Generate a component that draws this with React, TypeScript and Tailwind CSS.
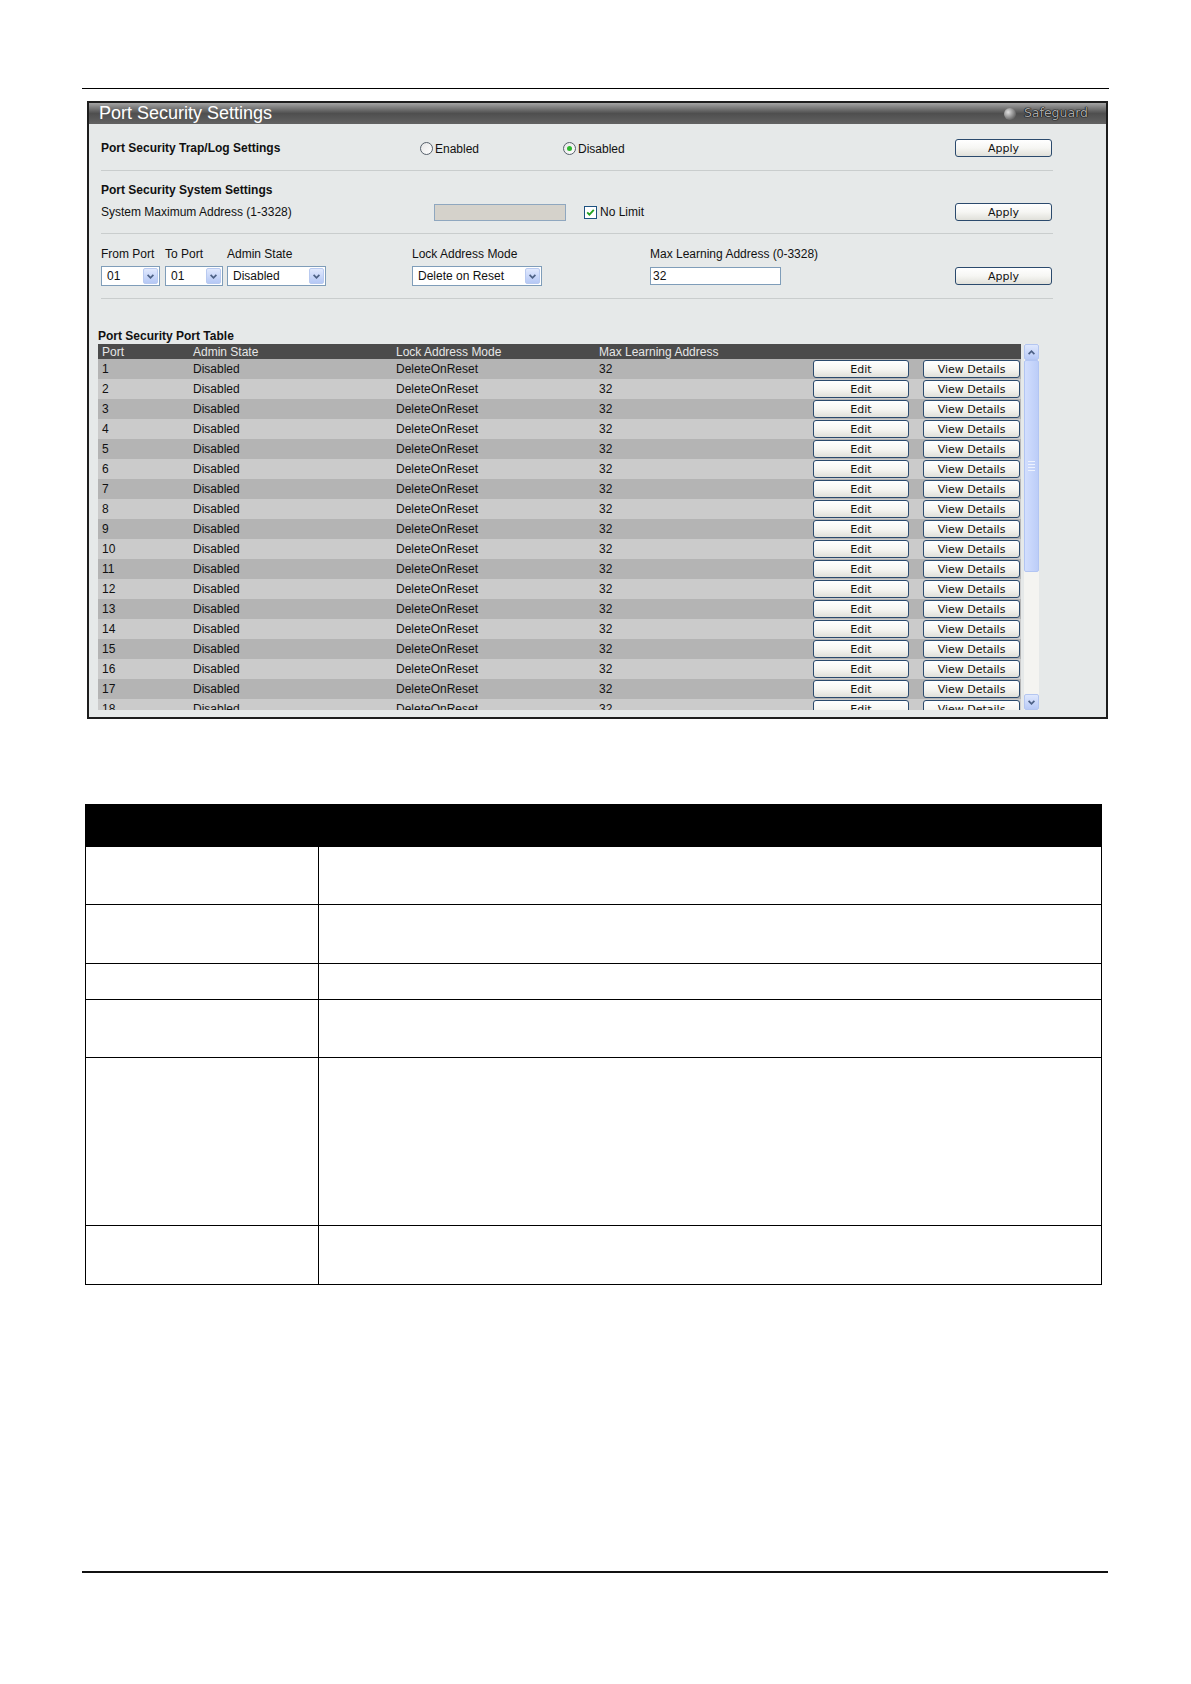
import React from 'react';

// Port Security Settings page (web UI screenshot + blank description table)

const rowCount = 18;
const descRows = ['h-[58px]', 'h-[59px]', 'h-[36px]', 'h-[58px]', 'h-[168px]', 'h-[59px]'];

const XpButton = ({ label, className }: { label: string; className: string }) => (
  <button
    type="button"
    className={`flex shrink-0 items-center justify-center rounded-[3px] border border-[#2b4a6d] bg-linear-to-b from-[#ffffff] via-[#f6f6f3] to-[#e0e0da] font-['DejaVu_Sans',Verdana,sans-serif] text-[11px] leading-none text-[#111] ${className}`}
  >
    {label}
  </button>
);

const Chevron = ({ up }: { up?: boolean }) => (
  <svg width="7" height="5" viewBox="0 0 7 5">
    <path
      d={up ? 'M0.6 4.2 L3.5 1.2 L6.4 4.2' : 'M0.6 0.8 L3.5 3.8 L6.4 0.8'}
      fill="none"
      stroke="#4d6185"
      strokeWidth="1.7"
    />
  </svg>
);

const XpSelect = ({ value, className }: { value: string; className: string }) => (
  <div className={`flex h-[20px] shrink-0 items-center justify-between border border-[#7f9db9] bg-white pl-[5px] pr-px ${className}`}>
    <span className="text-[12px] leading-none text-[#111]">{value}</span>
    <span className="flex h-[16px] w-[15px] items-center justify-center rounded-[2px] border border-[#b9caf0] bg-linear-to-b from-[#e1e9fd] to-[#b5c8f5]">
      <Chevron />
    </span>
  </div>
);

const Radio = ({ checked }: { checked?: boolean }) => (
  <span className="flex h-[13px] w-[13px] shrink-0 items-center justify-center rounded-full border border-[#56606b] bg-linear-to-br from-[#e6e6e6] to-white">
    {checked && <span className="h-[5px] w-[5px] rounded-full bg-[#2eb82e]" />}
  </span>
);

const Checkbox = () => (
  <span className="flex h-[13px] w-[13px] shrink-0 items-center justify-center border border-[#1c5180] bg-white">
    <svg width="9" height="9" viewBox="0 0 9 9">
      <path d="M1.2 4.4 L3.4 6.6 L7.8 1.8" fill="none" stroke="#21a121" strokeWidth="1.8" />
    </svg>
  </span>
);

const Separator = ({ className }: { className: string }) => (
  <div className={`h-px bg-[#c9cdcd] ${className}`} />
);

const Scrollbar = () => (
  <div className="flex h-full w-[15px] flex-col bg-[#f4f4f1]">
    <div className="flex h-[16px] items-center justify-center rounded-[2px] border border-[#b4c6f0] bg-linear-to-b from-[#dfe8fd] to-[#b8caf6]">
      <Chevron up />
    </div>
    <div className="flex h-[212px] flex-col items-center justify-center gap-[2px] rounded-[2px] border border-[#b2c5f3] bg-linear-to-r from-[#d2defd] to-[#bccdf8]">
      <span className="h-px w-[7px] bg-[#eef3fe]" />
      <span className="h-px w-[7px] bg-[#eef3fe]" />
      <span className="h-px w-[7px] bg-[#eef3fe]" />
      <span className="h-px w-[7px] bg-[#eef3fe]" />
    </div>
    <div className="flex-1" />
    <div className="flex h-[16px] items-center justify-center rounded-[2px] border border-[#b4c6f0] bg-linear-to-b from-[#dfe8fd] to-[#b8caf6]">
      <Chevron />
    </div>
  </div>
);

const PortTable = () => (
  <div className="h-full w-[923px] shrink-0 overflow-hidden">
    <div className="flex h-[15px] items-center bg-[#4b4b4b] text-[12px] leading-none text-[#e6e6e6]">
      <span className="w-[92px] pl-[4px]">Port</span>
      <span className="w-[203px] pl-[3px]">Admin State</span>
      <span className="w-[203px] pl-[3px]">Lock Address Mode</span>
      <span className="pl-[3px]">Max Learning Address</span>
    </div>
    {Array.from({ length: rowCount }, (_, i) => i + 1).map((n) => (
      <div
        key={n}
        className={`flex h-[20px] items-center text-[12px] leading-none text-[#111] ${n % 2 === 1 ? 'bg-[#b4b4b4]' : 'bg-[#cbcbcb]'}`}
      >
        <span className="w-[92px] pl-[4px]">{n}</span>
        <span className="w-[203px] pl-[3px]">Disabled</span>
        <span className="w-[203px] pl-[3px]">DeleteOnReset</span>
        <span className="w-[217px] pl-[3px]">32</span>
        <XpButton label="Edit" className="h-[18px] w-[96px]" />
        <XpButton label="View Details" className="ml-[14px] h-[18px] w-[97px]" />
      </div>
    ))}
  </div>
);

const SettingsPanel = () => (
  <div className="ml-[5px] mt-[12px] flex h-[618px] w-[1021px] flex-col border-2 border-[#1d1d1d] bg-[#e6e9e9]">
    <div className="flex h-[21px] shrink-0 items-center justify-between bg-linear-to-b from-[#a4a4a4] via-[#4f4f4f] to-[#626262] pl-[10px] pr-[18px]">
      <span className="pb-[2px] text-[18px] leading-none text-white">Port Security Settings</span>
      <div className="flex items-center gap-[8px]">
        <span className="h-[12px] w-[12px] rounded-full bg-[radial-gradient(circle_at_35%_35%,#e0e0e0,#7a7a7a_60%,#3a3a3a)]" />
        <span className="font-['DejaVu_Sans',Verdana,sans-serif] text-[12.5px] leading-none text-[#a9a9a9] [text-shadow:0_0_1px_#000,0_0_1px_#000,0_0_1px_#000]">
          Safeguard
        </span>
      </div>
    </div>

    <div className="ml-[12px] w-[952px] text-[12px] leading-none text-[#111]">
      <div className="mt-[15px] flex h-[18px] items-center">
        <span className="w-[319px] font-bold">Port Security Trap/Log Settings</span>
        <label className="flex w-[143px] items-center gap-[2px] pt-px">
          <Radio />
          <span>Enabled</span>
        </label>
        <label className="flex items-center gap-[2px] pt-px">
          <Radio checked />
          <span>Disabled</span>
        </label>
        <XpButton label="Apply" className="ml-auto mr-px h-[18px] w-[97px]" />
      </div>
      <Separator className="mt-[13px]" />

      <div className="mt-[12px] flex h-[14px] items-center font-bold">Port Security System Settings</div>
      <div className="mt-[6px] flex h-[18px] items-center">
        <span className="w-[333px]">System Maximum Address (1-3328)</span>
        <div className="h-[17px] w-[132px] border border-[#8fa7bf] bg-[#d5d2cb]" />
        <label className="ml-[18px] flex items-center gap-[3px]">
          <Checkbox />
          <span>No Limit</span>
        </label>
        <XpButton label="Apply" className="ml-auto mr-px h-[18px] w-[97px]" />
      </div>
      <Separator className="mt-[12px]" />

      <div className="mt-[13px] flex h-[14px] items-center">
        <span className="w-[64px]">From Port</span>
        <span className="w-[62px]">To Port</span>
        <span className="w-[185px]">Admin State</span>
        <span className="w-[238px]">Lock Address Mode</span>
        <span>Max Learning Address (0-3328)</span>
      </div>
      <div className="mt-[5px] flex h-[20px] items-center">
        <XpSelect value="01" className="w-[59px]" />
        <XpSelect value="01" className="ml-[5px] w-[58px]" />
        <XpSelect value="Disabled" className="ml-[4px] w-[99px]" />
        <XpSelect value="Delete on Reset" className="ml-[86px] w-[130px]" />
        <div className="ml-[108px] flex h-[18px] w-[131px] items-center border border-[#7f9db9] bg-white pl-[2px]">32</div>
        <XpButton label="Apply" className="ml-auto mr-px h-[18px] w-[97px]" />
      </div>
      <Separator className="mt-[12px]" />
    </div>

    <div className="ml-[9px] mt-[30px] flex h-[14px] items-center text-[12px] font-bold leading-none text-[#111]">
      Port Security Port Table
    </div>
    <div className="ml-[9px] mt-px flex h-[366px] gap-[3px]">
      <PortTable />
      <Scrollbar />
    </div>
  </div>
);

const DescriptionTable = () => (
  <div className="ml-[3px] mt-[85px] w-[1017px] border-x border-black">
    <div className="h-[43px] bg-black" />
    {descRows.map((h, i) => (
      <div key={i} className={`flex border-b border-black ${h}`}>
        <div className="w-[233px] border-r border-black" />
        <div className="flex-1" />
      </div>
    ))}
  </div>
);

export default function App() {
  return (
    <div className="min-h-[1684px] w-full bg-white pt-[88px] font-['Liberation_Sans',Arial,sans-serif] text-[12px] text-[#111]">
      <div className="ml-[82px] w-[1027px]">
        <div className="h-px bg-black" />
        <SettingsPanel />
        <DescriptionTable />
        <div className="mt-[286px] h-[2px] w-[1026px] bg-[#111]" />
      </div>
    </div>
  );
}
